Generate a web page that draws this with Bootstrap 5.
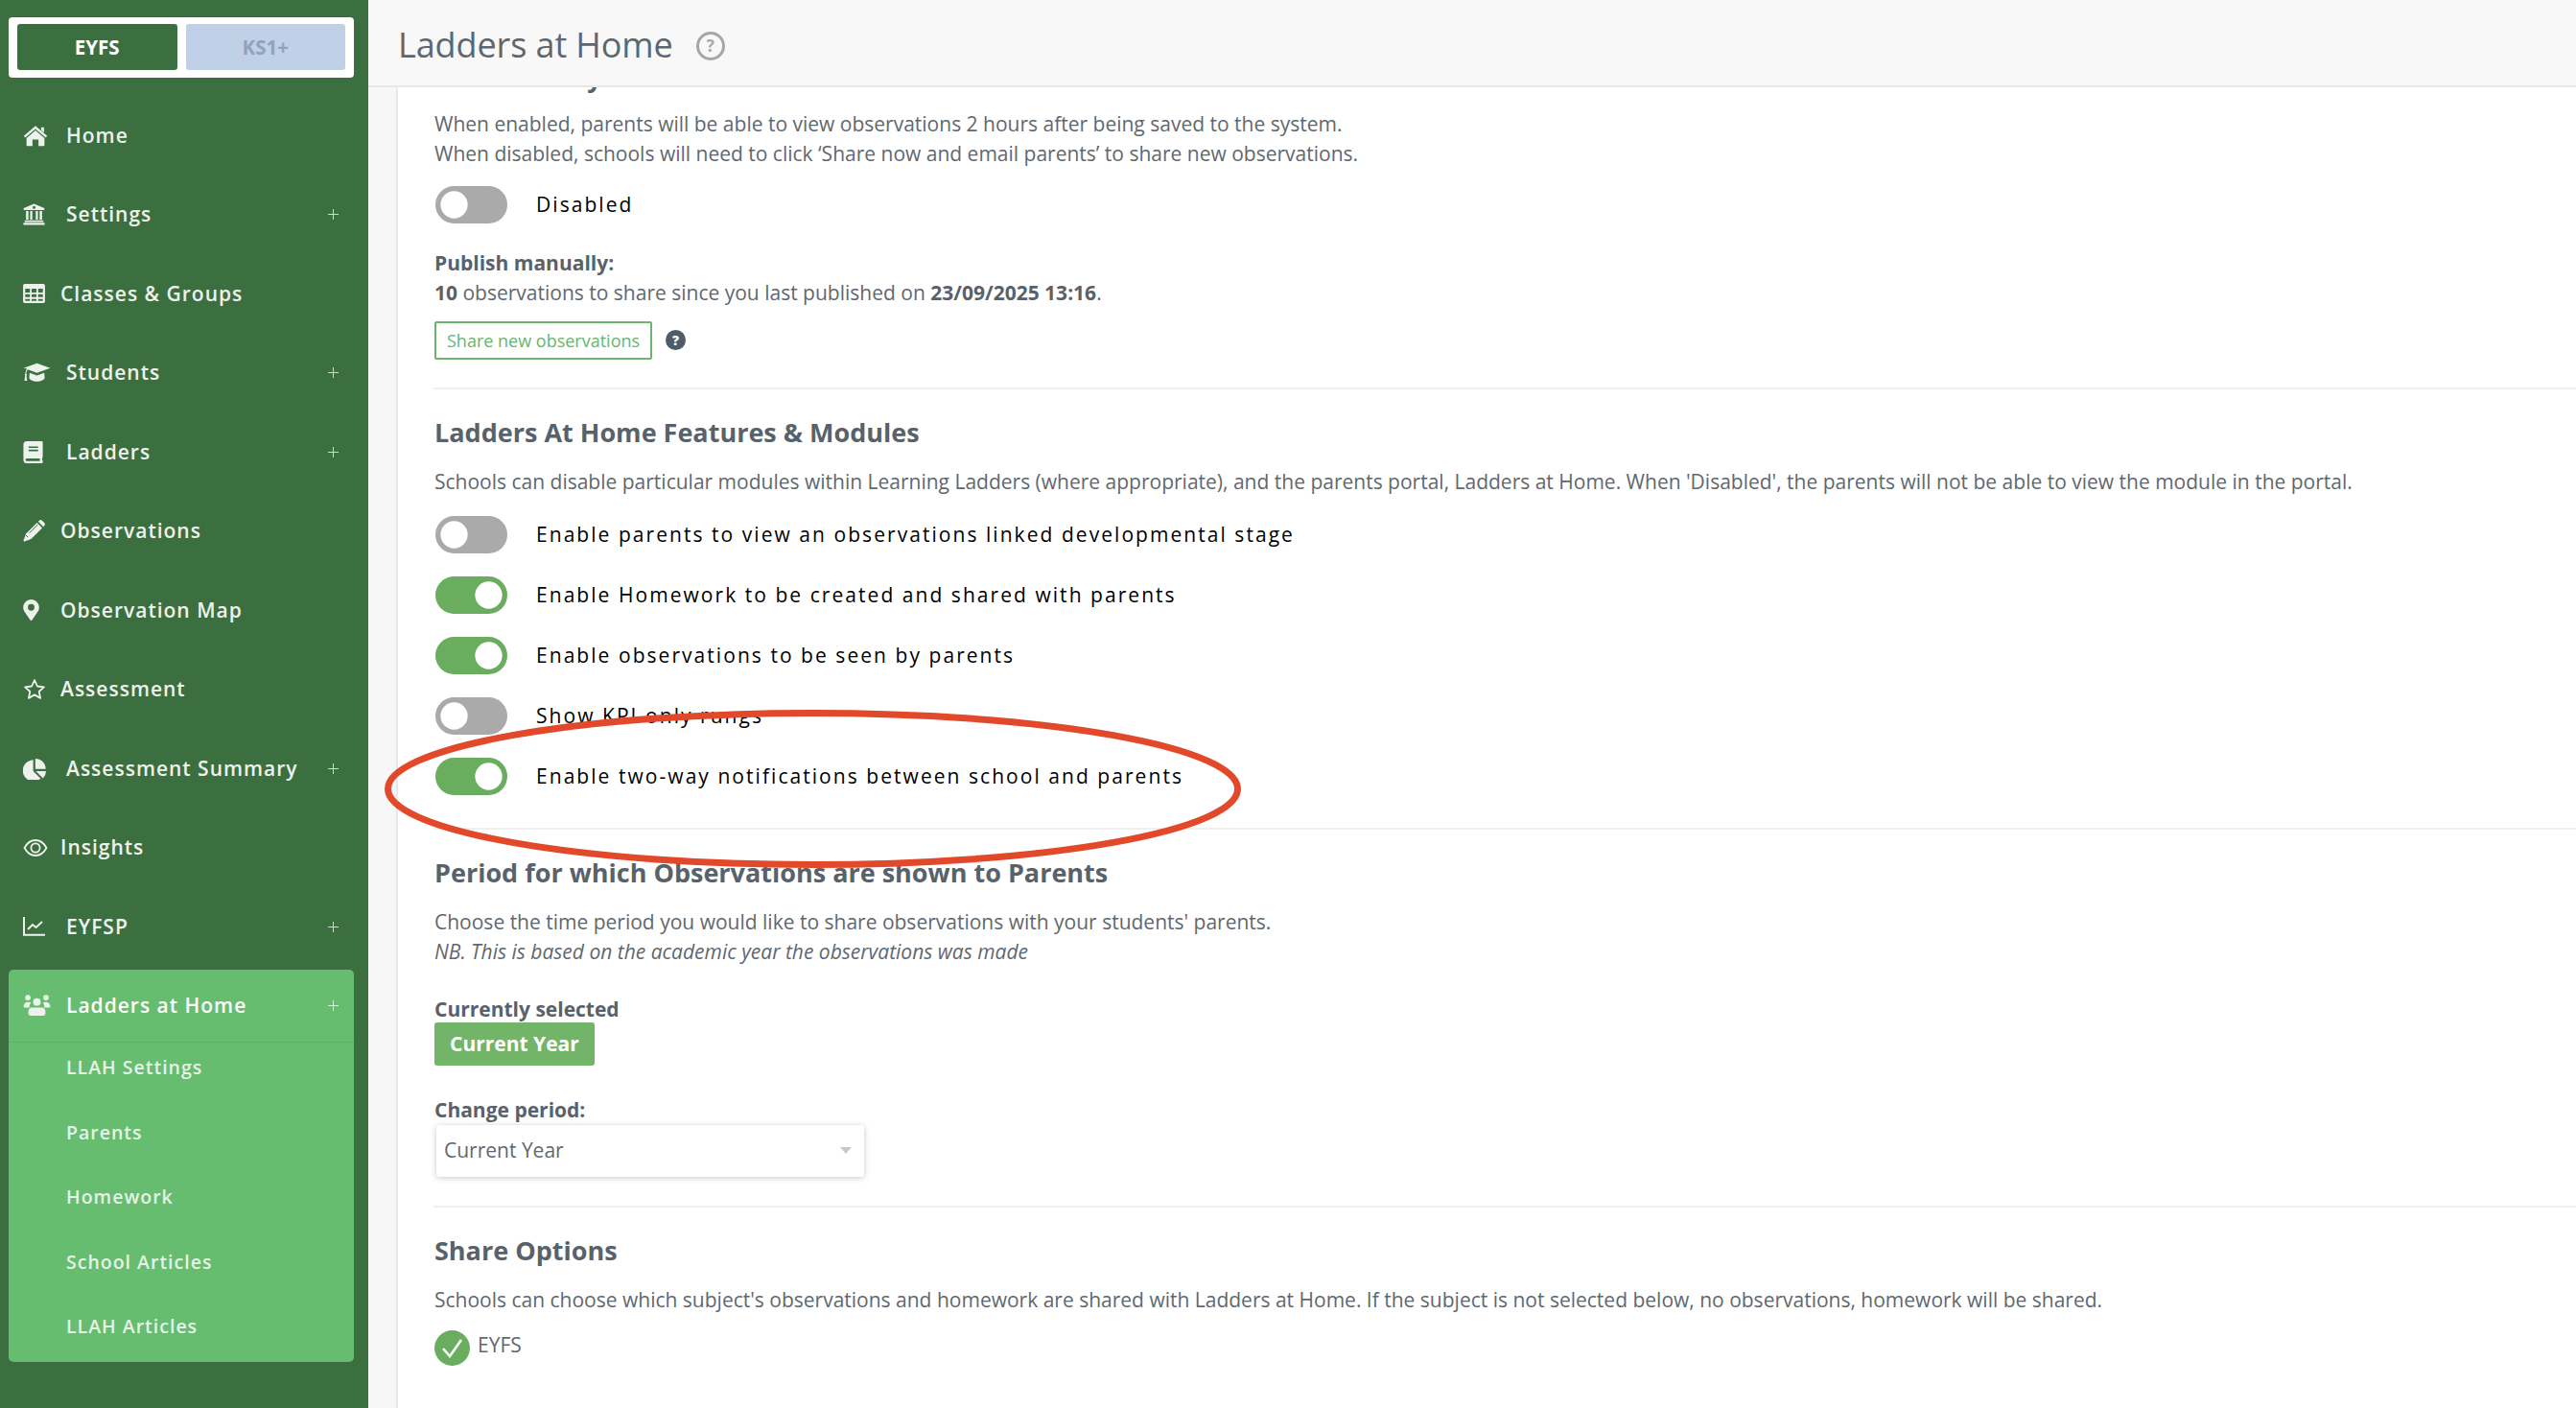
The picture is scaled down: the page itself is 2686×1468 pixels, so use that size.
<!DOCTYPE html>
<html lang="en">
<head>
  <meta charset="UTF-8">
  <meta name="viewport" content="width=device-width, initial-scale=1.0">
  <title>Ladders at Home</title>
  <link href="https://cdn.jsdelivr.net/npm/bootstrap@5.3.0/dist/css/bootstrap.min.css" rel="stylesheet">
  <style>
    html, body { height: 100%; }
    body { font-family: "Open Sans", "Noto Sans", sans-serif; font-size: 21px; line-height: 31px; color: #5f686f; overflow: hidden; background: #fff; }
    .app-wrap { height: 100vh; }

    /* sidebar */
    .side-bar { width: 384px; background: #3c6f40; padding: 18px 15px 0 9px; }
    .stage-box { background: #fff; border-radius: 4px; padding: 7px 9px 8px; gap: 9px; height: 63px; margin-bottom: 19px; }
    .stage-btn { flex: 1 1 0; border-radius: 3px; font-size: 20.5px; font-weight: 700; line-height: 48px; text-align: center; padding: 0; border: 0; }
    .stage-on { background: #3c6f40; color: #fff; }
    .stage-off { background: #c0d0e6; color: #8fa3bf; }
    .side-link { height: 82.5px; padding: 0 16px 0 15px; color: #edf2ed; font-size: 21px; font-weight: 600; letter-spacing: 1px; text-decoration: none; }
    .side-ic { width: 45px; flex: none; }
    .side-ic.ic-short { width: 39px; }
    .side-ic svg { display: block; fill: #edf2ed; }
    .side-plus { margin-left: auto; width: 11px; height: 11px; opacity: .75; }
    .side-active { background: #66bd6f; border-radius: 5px; height: 409px; margin-top: 3.5px; }
    .side-active .side-link { height: 76px; color: #fff; border-bottom: 1px solid #5fb168; }
    .side-sub { display: block; padding-left: 60px; height: 67.5px; line-height: 67.5px; color: #e6f3e7; font-size: 19.5px; font-weight: 600; letter-spacing: 1px; text-decoration: none; }
    .sub-first { margin-top: -8px; }

    /* top bar */
    .top-bar { height: 91px; background: #f8f8f8; border-bottom: 2px solid #e7e7e7; padding: 4px 0 0 31px; flex: none; }
    .top-title { font-size: 36px; font-weight: 400; color: #5c6770; margin: 0; line-height: 1; letter-spacing: -.1px; }
    .help-ring { width: 30px; height: 30px; margin: 3px 0 0 24px; border: 3px solid #a6a6a6; border-radius: 50%; color: #a6a6a6; font-size: 17px; font-weight: 700; line-height: 24px; text-align: center; }

    /* content */
    .side-gutter { width: 31px; background: #f7f7f7; border-right: 2px solid #e8e8e8; flex: none; }
    .page-body { padding: 0 0 0 38px; overflow: hidden; }
    .page-inner { margin-top: -29.5px; }
    .sec-title { font-size: 27px; line-height: 38px; font-weight: 700; color: #58626b; margin: 0; }
    .sec-line { margin: 22px 0 26px -1px; border: 0; border-top: 2px solid #efefef; opacity: 1; }
    .sec-line.line-far { margin-top: 29px; }
    .sec-line.line-farther { margin-top: 30px; }
    .txt-row { margin: 0; }
    .strong-txt { font-weight: 700; color: #59626a; }
    .gp-6 { margin-top: 6px; }
    .gp-8 { margin-top: 8px; }
    .gp-14 { margin-top: 14px; }
    .gp-16 { margin-top: 16px; }
    .gp-17 { margin-top: 17px; }
    .gp-29 { margin-top: 29px; }
    .gp-31 { margin-top: 31px; }
    .switch-row { height: 63px; gap: 30px; color: #000; font-weight: 500; letter-spacing: 2.05px; padding-left: 0; margin-bottom: 0; min-height: 0; }
    .switch-row.form-switch .form-check-input { width: 75px; height: 39px; margin: 0 0 0 1px; border: 0; border-radius: 20px; background-color: #aaa; background-image: url("data:image/svg+xml,%3csvg xmlns='http://www.w3.org/2000/svg' viewBox='-4 -4 8 8'%3e%3ccircle r='2.900' fill='%23fff'/%3e%3c/svg%3e"); background-position: left center; flex: none; }
    .switch-row.form-switch .form-check-input:checked { background-color: #6aad5f; background-position: right center; }
    .switch-row .form-check-label { line-height: 31px; }
    .share-btn { font-size: 18px; line-height: 26px; padding: 5px 11px; border: 2px solid #6ab56f; border-radius: 2px; color: #6ab56f; background: #fff; }
    .help-dot { width: 21px; height: 21px; margin-left: 14px; border-radius: 50%; background: #4f5b66; color: #fff; font-size: 14px; font-weight: 800; line-height: 21px; text-align: center; }
    .year-pill { display: block; width: fit-content; margin-top: -2px; background: #72b568; color: #fff; font-weight: 700; border-radius: 3px; height: 45px; line-height: 45px; padding: 0 16px; }
    .period-pick { width: 446px; height: 54px; margin-left: 2px; padding: 0 0 0 8px; font-size: 21px; color: #5f686f; border: 0; border-radius: 3px; font-family: inherit; box-shadow: 0 1px 6px rgba(0,0,0,.22); background-image: url("data:image/svg+xml,%3csvg xmlns='http://www.w3.org/2000/svg' viewBox='0 0 12 7'%3e%3cpath d='M0 0h12L6 7z' fill='%23c8c8c8'/%3e%3c/svg%3e"); background-size: 12px 7px; background-position: right 13px center; }
    .tick-round { width: 37px; height: 37px; border-radius: 50%; background: #6aad5f; flex: none; }

    .ring-note { position: absolute; left: 395px; top: 732px; pointer-events: none; }
  </style>
</head>
<body>
  <div class="app-wrap d-flex position-relative">

    <!-- Sidebar -->
    <nav class="side-bar flex-shrink-0">
      <div class="stage-box d-flex">
        <button type="button" class="stage-btn stage-on">EYFS</button>
        <button type="button" class="stage-btn stage-off">KS1+</button>
      </div>

      <a class="side-link d-flex align-items-center" href="#">
        <span class="side-ic"><svg width="26" height="23" viewBox="0 0 576 512"><path d="M288 30 560 264l-34 38L288 98 50 302l-34-38zM288 136l208 176v168a16 16 0 0 1-16 16H358V344H218v152H96a16 16 0 0 1-16-16V312zM420 60h66v122l-66-56z"/></svg></span>Home
      </a>
      <a class="side-link d-flex align-items-center" href="#">
        <span class="side-ic"><svg width="23" height="23" viewBox="0 0 512 512"><path fill-rule="evenodd" d="M256 10 496 110v44H16v-44zM256 62a34 34 0 1 0 0 68 34 34 0 0 0 0-68zM70 176h56v200H70zM166 176h50v200h-50zM296 176h50v200h-50zM386 176h56v200h-56zM40 396h432v40H40zM10 452h492v50H10z"/></svg></span>Settings
        <svg class="side-plus" viewBox="0 0 11 11"><path d="M5.5 0v11M0 5.500h11" stroke="#fff" stroke-width="1" fill="none"/></svg>
      </a>
      <a class="side-link d-flex align-items-center" href="#">
        <span class="side-ic ic-short"><svg width="23" height="20" viewBox="0 0 512 448"><path fill-rule="evenodd" d="M40 0h432a40 40 0 0 1 40 40v368a40 40 0 0 1-40 40H40a40 40 0 0 1-40-40V40A40 40 0 0 1 40 0zM50 110v90h110v-90zM200 110v90h112v-90zM352 110v90h110v-90zM50 240v70h110v-70zM200 240v70h112v-70zM352 240v70h110v-70zM50 350v50h110v-50zM200 350v50h112v-50zM352 350v50h110v-50z"/></svg></span>Classes &amp; Groups
      </a>
      <a class="side-link d-flex align-items-center" href="#">
        <span class="side-ic"><svg width="29" height="23" viewBox="0 0 640 512"><path d="M320 40 630 150 320 260 108 186c-24 26-32 60-34 96 12 8 16 32 4 44l14 120H30l16-122c-10-14-6-36 6-42 2-46 14-86 38-116L10 150zM150 262l170 60 170-60 10 112c0 50-90 88-180 88s-180-38-180-88z"/></svg></span>Students
        <svg class="side-plus" viewBox="0 0 11 11"><path d="M5.5 0v11M0 5.500h11" stroke="#fff" stroke-width="1" fill="none"/></svg>
      </a>
      <a class="side-link d-flex align-items-center" href="#">
        <span class="side-ic"><svg width="21" height="23" viewBox="0 0 448 512"><path fill-rule="evenodd" d="M80 0h344a24 24 0 0 1 24 24v344a24 24 0 0 1-14 22v58h14v40a24 24 0 0 1-24 24H80a80 80 0 0 1-80-80V80A80 80 0 0 1 80 0zM120 120v36h220v-36zM120 196v36h220v-36zM80 400a32 32 0 0 0 0 64h300v-64z"/></svg></span>Ladders
        <svg class="side-plus" viewBox="0 0 11 11"><path d="M5.5 0v11M0 5.500h11" stroke="#fff" stroke-width="1" fill="none"/></svg>
      </a>
      <a class="side-link d-flex align-items-center" href="#">
        <span class="side-ic ic-short"><svg width="23" height="23" viewBox="0 0 23 23"><path d="M15.800 1.800l.9-.9a2.400 2.400 0 0 1 3.400 0l2 2a2.400 2.400 0 0 1 0 3.400l-.9.9zM14.600 3l5.400 5.400L8.400 20 1.800 22.400a.9.9 0 0 1-1.200-1.200L3 14.600z"/><path d="M6.500 13.800l9-9M5 18l-1.800-1.800" fill="none" stroke="#3c6f40" stroke-width="1"/></svg></span>Observations
      </a>
      <a class="side-link d-flex align-items-center" href="#">
        <span class="side-ic ic-short"><svg width="17" height="22" viewBox="0 0 384 512"><path fill-rule="evenodd" d="M192 0C86 0 0 86 0 192c0 77 27 99 172 309a24 24 0 0 0 40 0C357 291 384 269 384 192 384 86 298 0 192 0zm0 272a80 80 0 1 1 0-160 80 80 0 0 1 0 160z"/></svg></span>Observation Map
      </a>
      <a class="side-link d-flex align-items-center" href="#">
        <span class="side-ic ic-short"><svg width="24" height="23" viewBox="0 0 24 23"><path d="M12 2l2.900 6.500 7 .8-5.200 4.700 1.400 6.900L12 17.400 5.900 20.900l1.400-6.900L2.100 9.300l7-.8z" fill="none" stroke="#edf2ed" stroke-width="1.800" stroke-linejoin="round"/></svg></span>Assessment
      </a>
      <a class="side-link d-flex align-items-center" href="#">
        <span class="side-ic"><svg width="25" height="23" viewBox="0 0 544 512"><path d="M230 50v260l172 172a248 248 0 1 1-172-432zM280 20a240 240 0 0 1 240 240H280zM292 310h236a240 240 0 0 1-70 166z"/></svg></span>Assessment Summary
        <svg class="side-plus" viewBox="0 0 11 11"><path d="M5.5 0v11M0 5.500h11" stroke="#fff" stroke-width="1" fill="none"/></svg>
      </a>
      <a class="side-link d-flex align-items-center" href="#">
        <span class="side-ic ic-short"><svg width="26" height="20" viewBox="0 0 26 20"><path d="M1.500 10C4.500 4.500 8.500 2 13 2s8.500 2.500 11.500 8C21.500 15.500 17.500 18 13 18S4.500 15.500 1.500 10z" fill="none" stroke="#edf2ed" stroke-width="1.800"/><circle cx="13" cy="10" r="4.600" fill="none" stroke="#edf2ed" stroke-width="1.800"/></svg></span>Insights
      </a>
      <a class="side-link d-flex align-items-center" href="#">
        <span class="side-ic"><svg width="23" height="20" viewBox="0 0 23 20"><path d="M1 0v18.800h22" fill="none" stroke="#edf2ed" stroke-width="2"/><path d="M5 13l5-5 3.500 3L20 5" fill="none" stroke="#edf2ed" stroke-width="2"/></svg></span>EYFSP
        <svg class="side-plus" viewBox="0 0 11 11"><path d="M5.5 0v11M0 5.500h11" stroke="#fff" stroke-width="1" fill="none"/></svg>
      </a>

      <div class="side-active">
        <a class="side-link d-flex align-items-center" href="#">
          <span class="side-ic"><svg width="29" height="23" viewBox="0 0 640 512"><circle cx="110" cy="70" r="62"/><circle cx="530" cy="70" r="62"/><circle cx="320" cy="170" r="88"/><path d="M10 290c0-80 40-120 110-120 30 0 48 6 62 18-28 30-40 70-34 112H40a30 30 0 0 1-30-10zM630 290c0-80-40-120-110-120-30 0-48 6-62 18 28 30 40 70 34 112h108a30 30 0 0 0 30-10zM200 300h240c60 0 80 60 80 130 0 50-30 60-60 60H180c-30 0-60-10-60-60 0-70 20-130 80-130z"/></svg></span>Ladders at Home
          <svg class="side-plus" viewBox="0 0 11 11"><path d="M5.5 0v11M0 5.500h11" stroke="#fff" stroke-width="1" fill="none"/></svg>
        </a>
        <a class="side-sub sub-first" href="#">LLAH Settings</a>
        <a class="side-sub" href="#">Parents</a>
        <a class="side-sub" href="#">Homework</a>
        <a class="side-sub" href="#">School Articles</a>
        <a class="side-sub" href="#">LLAH Articles</a>
      </div>
    </nav>

    <!-- Main -->
    <div class="flex-grow-1 d-flex flex-column overflow-hidden">
      <header class="top-bar d-flex align-items-center">
        <h1 class="top-title">Ladders at Home</h1>
        <span class="help-ring">?</span>
      </header>

      <div class="d-flex flex-grow-1 overflow-hidden">
        <div class="side-gutter"></div>
        <main class="page-body flex-grow-1">
          <div class="page-inner">
            <h4 class="sec-title">Publish Daily</h4>

            <p class="txt-row gp-14">When enabled, parents will be able to view observations 2 hours after being saved to the system.</p>
            <p class="txt-row">When disabled, schools will need to click ‘Share now and email parents’ to share new observations.</p>

            <div class="form-check form-switch switch-row d-flex align-items-center gp-6">
              <input class="form-check-input" type="checkbox" id="sw-publish">
              <label class="form-check-label" for="sw-publish">Disabled</label>
            </div>

            <p class="txt-row strong-txt gp-14">Publish manually:</p>
            <p class="txt-row"><span class="strong-txt">10</span> observations to share since you last published on <span class="strong-txt">23/09/2025 13:16</span>.</p>

            <div class="d-flex align-items-center gp-14">
              <button type="button" class="btn share-btn">Share new observations</button>
              <span class="help-dot">?</span>
            </div>

            <hr class="sec-line line-far">

            <h4 class="sec-title">Ladders At Home Features &amp; Modules</h4>
            <p class="txt-row gp-17">Schools can disable particular modules within Learning Ladders (where appropriate), and the parents portal, Ladders at Home. When 'Disabled', the parents will not be able to view the module in the portal.</p>

            <div class="gp-8">
              <div class="form-check form-switch switch-row d-flex align-items-center">
                <input class="form-check-input" type="checkbox" id="sw-stage">
                <label class="form-check-label" for="sw-stage">Enable parents to view an observations linked developmental stage</label>
              </div>
              <div class="form-check form-switch switch-row d-flex align-items-center">
                <input class="form-check-input" type="checkbox" id="sw-homework" checked>
                <label class="form-check-label" for="sw-homework">Enable Homework to be created and shared with parents</label>
              </div>
              <div class="form-check form-switch switch-row d-flex align-items-center">
                <input class="form-check-input" type="checkbox" id="sw-obs" checked>
                <label class="form-check-label" for="sw-obs">Enable observations to be seen by parents</label>
              </div>
              <div class="form-check form-switch switch-row d-flex align-items-center">
                <input class="form-check-input" type="checkbox" id="sw-kpi">
                <label class="form-check-label" for="sw-kpi">Show KPI only rungs</label>
              </div>
              <div class="form-check form-switch switch-row d-flex align-items-center">
                <input class="form-check-input" type="checkbox" id="sw-notify" checked>
                <label class="form-check-label" for="sw-notify">Enable two-way notifications between school and parents</label>
              </div>
            </div>

            <hr class="sec-line">

            <h4 class="sec-title">Period for which Observations are shown to Parents</h4>
            <p class="txt-row gp-17">Choose the time period you would like to share observations with your students' parents.</p>
            <p class="txt-row fst-italic">NB. This is based on the academic year the observations was made</p>

            <p class="txt-row strong-txt gp-29">Currently selected</p>
            <span class="year-pill">Current Year</span>

            <p class="txt-row strong-txt gp-31">Change period:</p>
            <select class="form-select period-pick">
              <option>Current Year</option>
            </select>

            <hr class="sec-line line-farther">

            <h4 class="sec-title">Share Options</h4>
            <p class="txt-row gp-17">Schools can choose which subject's observations and homework are shared with Ladders at Home. If the subject is not selected below, no observations, homework will be shared.</p>
            <div class="d-flex gp-16">
              <span class="tick-round"><svg width="37" height="37" viewBox="0 0 37 37"><path d="M9 19l7 8 12-17" fill="none" stroke="#fff" stroke-width="2.600"/></svg></span>
              <span class="ms-2">EYFS</span>
            </div>
          </div>
        </main>
      </div>
    </div>

    <!-- red ring drawn over the screenshot -->
    <svg class="ring-note" width="910" height="180" viewBox="0 0 910 180">
      <ellipse cx="452.500" cy="90.500" rx="443" ry="79" fill="none" stroke="#e2492b" stroke-width="7"/>
    </svg>
  </div>
</body>
</html>
